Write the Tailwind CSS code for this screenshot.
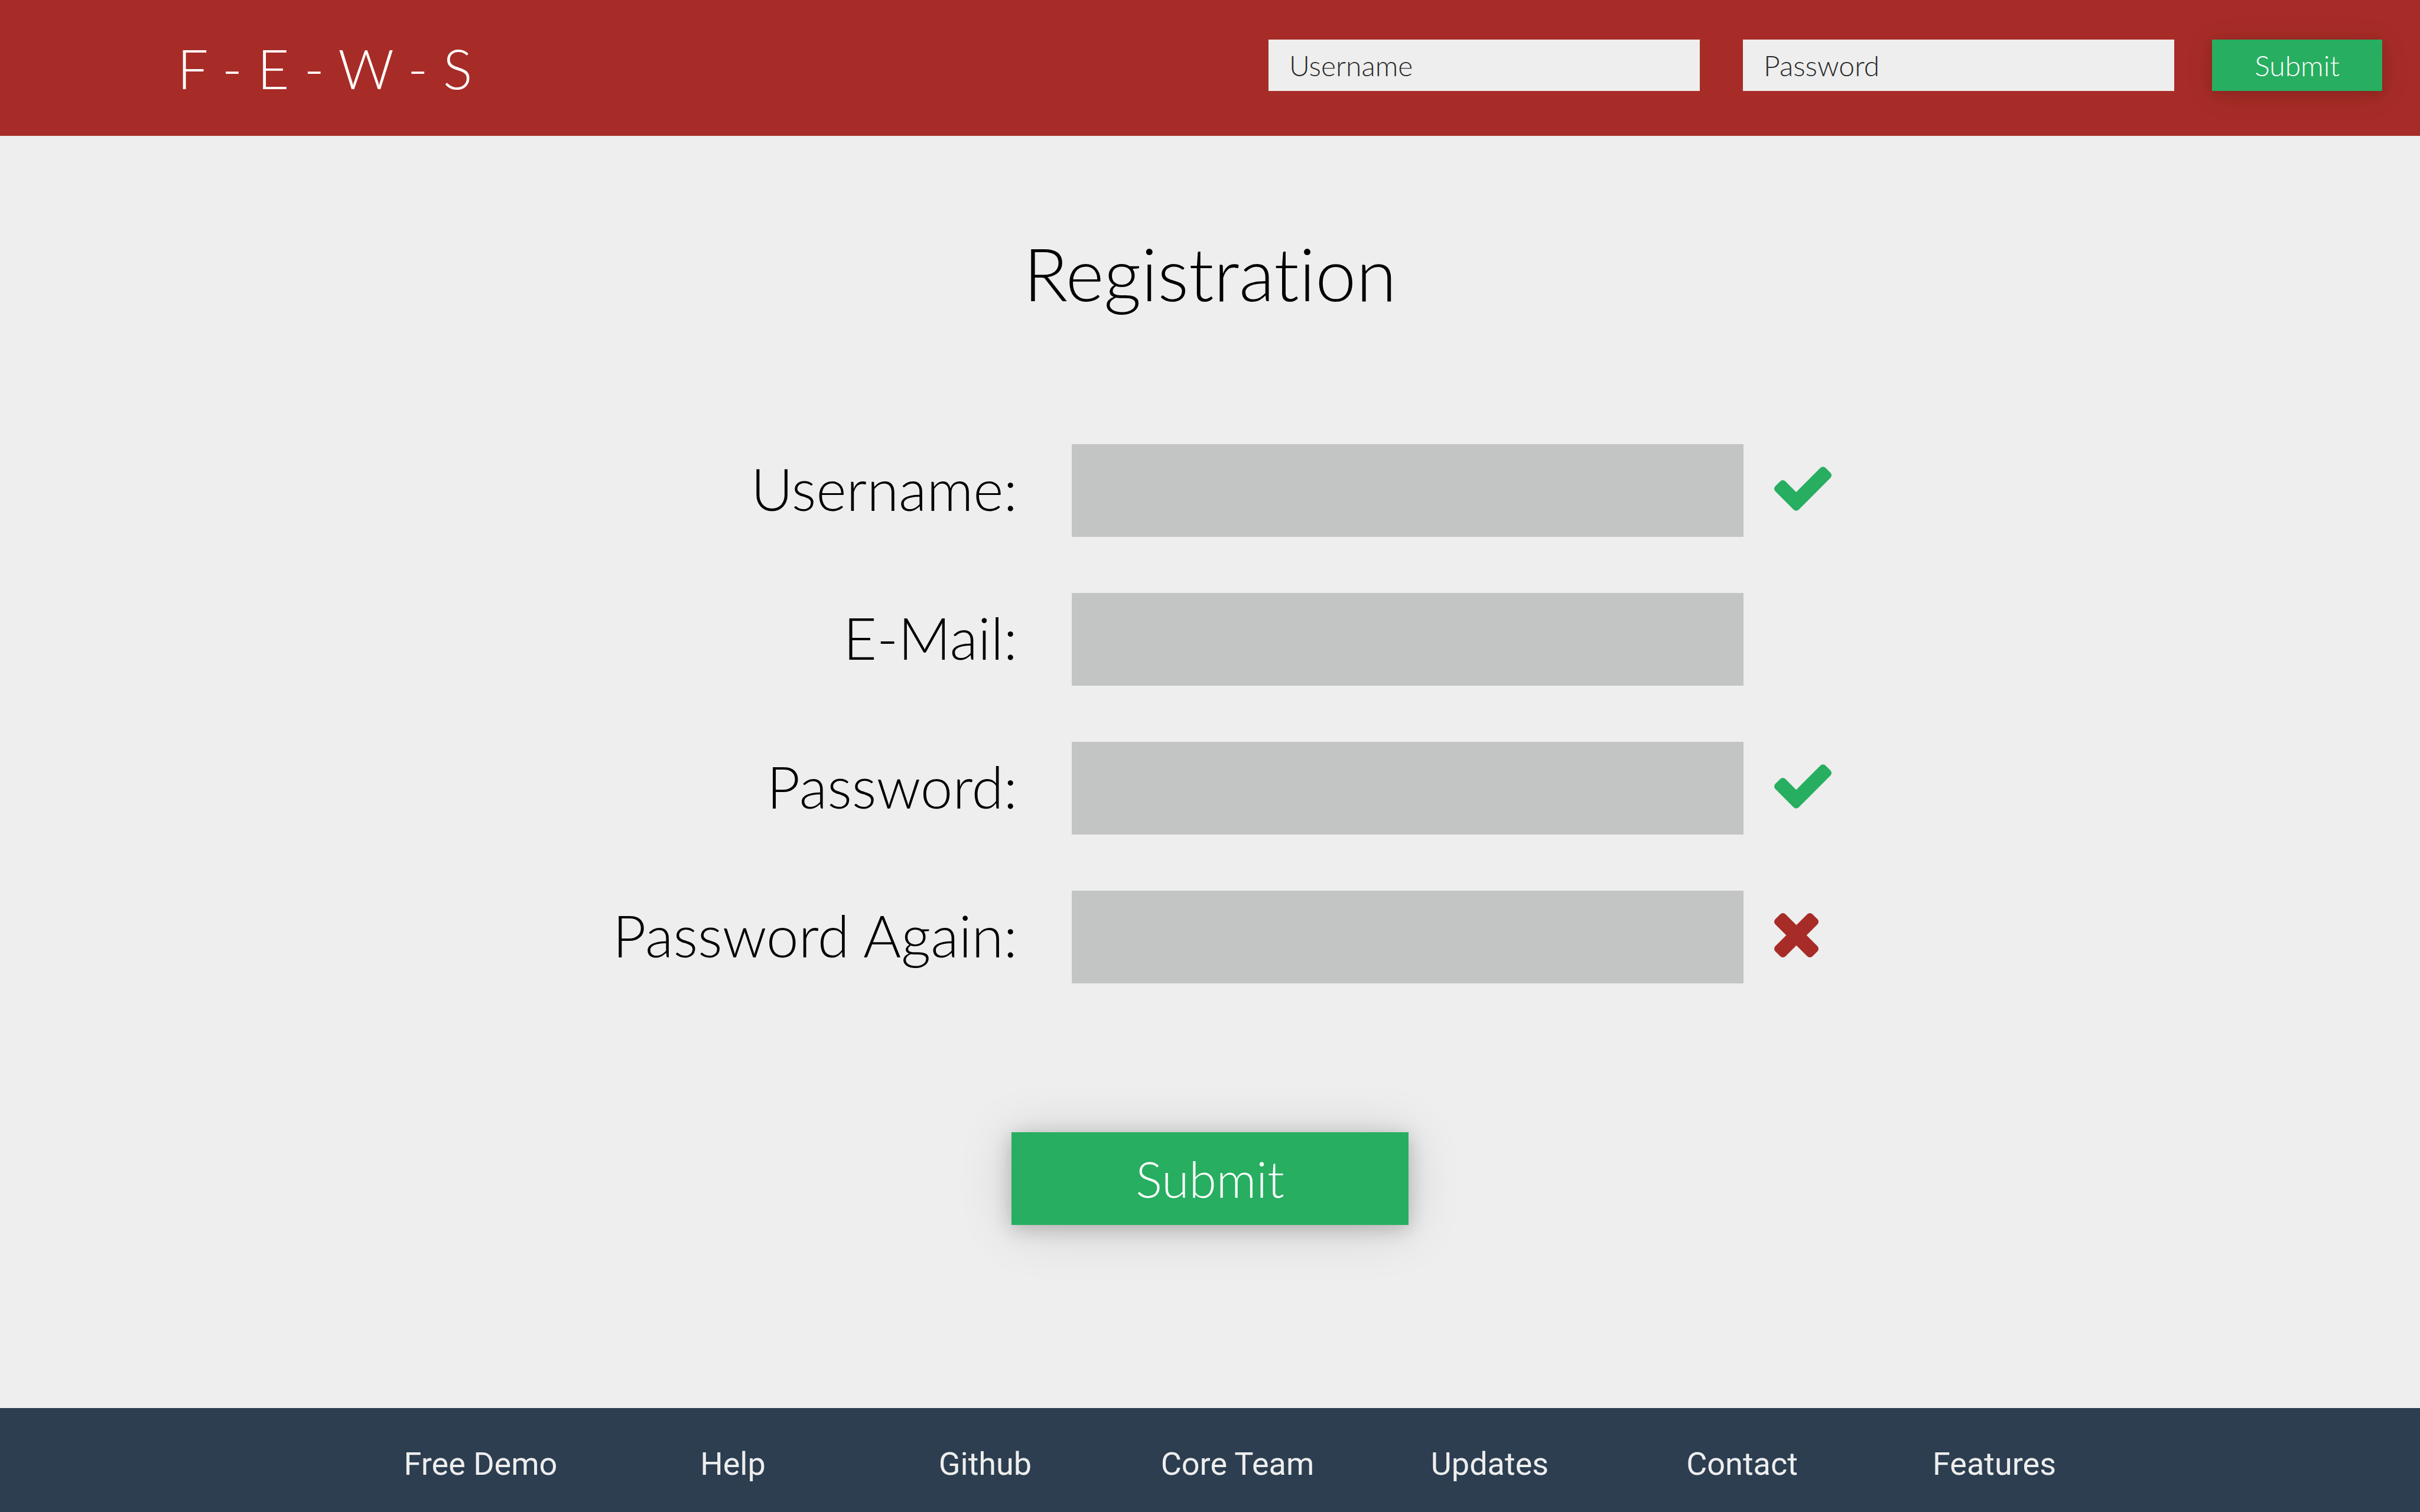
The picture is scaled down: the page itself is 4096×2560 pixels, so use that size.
<!DOCTYPE html>
<html lang="en">
<head>
<meta charset="utf-8">
<meta name="viewport" content="width=device-width, initial-scale=1">
<title>F-E-W-S Registration</title>
<script src="https://cdn.jsdelivr.net/npm/@tailwindcss/browser@4"></script>
</head>
<body class="flex min-h-screen flex-col bg-[#eeeeee] font-['Lato',sans-serif] font-light text-black">
  <header class="flex h-[230px] items-center justify-between bg-[#a72c27] pl-[300px] pr-16">
    <a href="#" class="whitespace-pre text-[93px] leading-[128px] text-white">F - E - W - S</a>
    <form class="flex items-center pb-[9px] text-[48px]">
      <input type="text" aria-label="Username" placeholder="Username" class="mr-[73px] h-[87px] w-[730px] bg-[#eeeeee] px-[35px] placeholder:text-[#2b2b2b]">
      <input type="password" aria-label="Password" placeholder="Password" class="mr-16 h-[87px] w-[730px] bg-[#eeeeee] px-[35px] placeholder:text-[#2b2b2b]">
      <button type="submit" class="h-[87px] w-72 bg-[#27ae60] text-white shadow-[0_4px_16px_rgba(0,0,0,0.1),0_6px_48px_rgba(0,0,0,0.12)]">Submit</button>
    </form>
  </header>

  <main class="flex flex-1 flex-col pt-[152px]">
    <h1 class="text-center text-[124px] leading-[160px] [font-variant-ligatures:none]">Registration</h1>
    <form class="mt-[210px] flex flex-col text-[98px]">
      <div class="flex flex-col gap-[95px]">
        <div class="grid h-[157px] grid-cols-[1814fr_1137fr_1145fr] items-center">
          <label for="username" class="pb-2 pr-[92px] text-right leading-[120px]">Username:</label>
          <input id="username" type="text" class="h-full w-full bg-[#c3c5c4] px-8">
          <svg class="mb-[7px] ml-[52px] h-[75px] w-[97px] fill-[#27ae60]" viewBox="121 334 1550 1188" aria-label="Valid"><path d="M1671 566q0 40-28 68l-724 724-136 136q-28 28-68 28t-68-28l-136-136-362-362q-28-28-28-68t28-68l136-136q28-28 68-28t68 28l294 295 656-657q28-28 68-28t68 28l136 136q28 28 28 68z"/></svg>
        </div>
        <div class="grid h-[157px] grid-cols-[1814fr_1137fr_1145fr] items-center">
          <label for="email" class="pb-2 pr-[92px] text-right leading-[120px]">E-Mail:</label>
          <input id="email" type="email" class="h-full w-full bg-[#c3c5c4] px-8">
        </div>
        <div class="grid h-[157px] grid-cols-[1814fr_1137fr_1145fr] items-center">
          <label for="password" class="pb-2 pr-[92px] text-right leading-[120px]">Password:</label>
          <input id="password" type="password" class="h-full w-full bg-[#c3c5c4] px-8">
          <svg class="mb-[7px] ml-[52px] h-[75px] w-[97px] fill-[#27ae60]" viewBox="121 334 1550 1188" aria-label="Valid"><path d="M1671 566q0 40-28 68l-724 724-136 136q-28 28-68 28t-68-28l-136-136-362-362q-28-28-28-68t28-68l136-136q28-28 68-28t68 28l294 295 656-657q28-28 68-28t68 28l136 136q28 28 28 68z"/></svg>
        </div>
        <div class="grid h-[157px] grid-cols-[1814fr_1137fr_1145fr] items-center">
          <label for="password-again" class="pb-2 pr-[92px] text-right leading-[120px]">Password Again:</label>
          <input id="password-again" type="password" class="h-full w-full bg-[#c3c5c4] px-8">
          <svg class="mb-[7px] ml-[52px] size-[75px] fill-[#a72c27]" viewBox="302 366 1188 1188" aria-label="Invalid"><path d="M1490 1322q0 40-28 68l-136 136q-28 28-68 28t-68-28l-294-294-294 294q-28 28-68 28t-68-28l-136-136q-28-28-28-68t28-68l294-294-294-294q-28-28-28-68t28-68l136-136q28-28 68-28t68 28l294 294 294-294q28-28 68-28t68 28l136 136q28 28 28 68t-28 68l-294 294 294 294q28 28 28 68z"/></svg>
        </div>
      </div>
      <button type="submit" class="mt-[252px] h-[157px] w-[672px] self-center bg-[#27ae60] text-[84px] leading-[120px] text-white shadow-[0_6px_30px_rgba(0,0,0,0.2),0_6px_90px_rgba(0,0,0,0.15)]">Submit</button>
    </form>
  </main>

  <footer class="flex h-44 items-center bg-[#2c3e50] pl-[600px] pr-[507px] pt-[14px]">
    <nav class="grid w-full grid-cols-7 text-center font-['Roboto',sans-serif] text-[54px] font-normal leading-[64px] text-[#eeeeee]">
      <a href="#">Free Demo</a>
      <a href="#">Help</a>
      <a href="#">Github</a>
      <a href="#">Core Team</a>
      <a href="#">Updates</a>
      <a href="#">Contact</a>
      <a href="#">Features</a>
    </nav>
  </footer>
</body>
</html>
